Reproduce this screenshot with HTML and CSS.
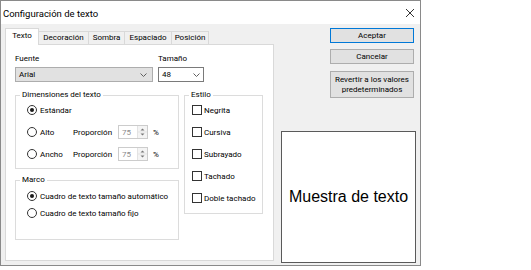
FILE: index.html
```html
<!DOCTYPE html>
<html lang="es">
<head>
<meta charset="utf-8">
<title>Configuración de texto</title>
<link rel="stylesheet" href="styles.css">
</head>
<body>
<div class="window">
  <div class="titlebar">
    <span class="title">Configuración de texto</span>
    <svg class="close" width="8" height="8" viewBox="0 0 8 8"><path d="M0 0 L8 8 M8 0 L0 8" stroke="#333" stroke-width="1" fill="none"/></svg>
  </div>
  <div class="body">
    <div class="tabs">
      <div class="tabstrip">
        <div class="tab active t-texto">Texto</div>
        <div class="tab t-deco">Decoración</div>
        <div class="tab t-sombra">Sombra</div>
        <div class="tab t-esp">Espaciado</div>
        <div class="tab t-pos">Posición</div>
      </div>
      <div class="panel">
        <div class="fields">
          <div class="field">
            <div class="label">Fuente</div>
            <div class="combo combo-font"><span>Arial</span><svg class="chev" width="7" height="4" viewBox="0 0 7 4"><path d="M0.5 0.5 L3.5 3.5 L6.5 0.5" stroke="#606060" fill="none"/></svg></div>
          </div>
          <div class="field">
            <div class="label">Tamaño</div>
            <div class="combo combo-size"><span>48</span><svg class="chev" width="7" height="4" viewBox="0 0 7 4"><path d="M0.5 0.5 L3.5 3.5 L6.5 0.5" stroke="#606060" fill="none"/></svg></div>
          </div>
        </div>
        <div class="groups">
          <div class="col-left">
            <div class="group g-dim">
              <div class="legend">Dimensiones del texto</div>
              <div class="rows">
                <div class="row"><span class="radio on"></span><span class="opt-label">Estándar</span></div>
                <div class="row">
                  <div class="opt"><span class="radio"></span><span class="opt-label">Alto</span></div>
                  <span class="prop">Proporción</span>
                  <div class="spin"><span class="spin-val">75</span><div class="spin-btns"><svg width="9" height="12" viewBox="0 0 9 12"><path d="M2.5 4.5 L4.5 2.5 L6.5 4.5 Z M2.5 7.5 L4.5 9.5 L6.5 7.5 Z" fill="#777"/><path d="M0 6 H9" stroke="#e3e3e3"/></svg></div></div>
                  <span class="pct">%</span>
                </div>
                <div class="row">
                  <div class="opt"><span class="radio"></span><span class="opt-label">Ancho</span></div>
                  <span class="prop">Proporción</span>
                  <div class="spin"><span class="spin-val">75</span><div class="spin-btns"><svg width="9" height="12" viewBox="0 0 9 12"><path d="M2.5 4.5 L4.5 2.5 L6.5 4.5 Z M2.5 7.5 L4.5 9.5 L6.5 7.5 Z" fill="#777"/><path d="M0 6 H9" stroke="#e3e3e3"/></svg></div></div>
                  <span class="pct">%</span>
                </div>
              </div>
            </div>
            <div class="group g-marco">
              <div class="legend">Marco</div>
              <div class="rows">
                <div class="row"><span class="radio on"></span><span class="opt-label">Cuadro de texto tamaño automático</span></div>
                <div class="row"><span class="radio"></span><span class="opt-label">Cuadro de texto tamaño fijo</span></div>
              </div>
            </div>
          </div>
          <div class="group g-estilo">
            <div class="legend">Estilo</div>
            <div class="rows">
              <div class="row"><span class="check"></span><span class="chk-label">Negrita</span></div>
              <div class="row"><span class="check"></span><span class="chk-label">Cursiva</span></div>
              <div class="row"><span class="check"></span><span class="chk-label">Subrayado</span></div>
              <div class="row"><span class="check"></span><span class="chk-label">Tachado</span></div>
              <div class="row"><span class="check"></span><span class="chk-label">Doble tachado</span></div>
            </div>
          </div>
        </div>
      </div>
    </div>
    <div class="side">
      <div class="btn btn-default">Aceptar</div>
      <div class="btn btn-cancel">Cancelar</div>
      <div class="btn btn-revert">Revertir a los valores<br>predeterminados</div>
      <div class="preview">Muestra de texto</div>
    </div>
  </div>
</div>
</body>
</html>
```

FILE: styles.css
```css
* { box-sizing: border-box; }
html, body { margin: 0; padding: 0; background: #ffffff; }
body {
  font-family: Roboto, "Noto Sans", sans-serif;
  font-size: 8px;
  color: #000;
}
.window {
  width: 421px;
  height: 266px;
  border: 1px solid #8a8a8a;
  background: #f0f0f0;
  display: flex;
  flex-direction: column;
}
.titlebar {
  height: 23px;
  flex: none;
  background: #fff;
  display: flex;
  align-items: center;
  justify-content: space-between;
  padding: 2px 6px 0 2px;
}
.title { font-size: 9.5px; line-height: 12px; }
.close { display: block; margin-top: -1px; }
.body {
  flex: 1;
  display: flex;
  padding: 4px 0 0 4px;
}
.tabs { width: 269px; display: flex; flex-direction: column; }
.tabstrip { height: 17px; display: flex; align-items: flex-end; }
.tab {
  height: 14px;
  border: 1px solid #d9d9d9;
  border-bottom: none;
  background: #f0f0f0;
  text-align: center;
  line-height: 12px;
  margin-left: -1px;
}
.tab.active {
  height: 17px;
  background: #fff;
  position: relative;
  z-index: 1;
  margin-left: 0;
  line-height: 13px;
}
.t-texto { width: 34px; }
.t-deco { width: 51px; }
.t-sombra { width: 37px; }
.t-esp { width: 48px; }
.t-pos { width: 38px; }
.panel {
  margin-top: -1px;
  height: 217px;
  background: #fff;
  border: 1px solid #d9d9d9;
  padding: 8px 0 0 9px;
}
.fields { display: flex; gap: 5px; }
.label { height: 11px; line-height: 11px; margin-bottom: 3px; }
.combo {
  height: 15px;
  display: flex;
  align-items: center;
  justify-content: space-between;
  padding: 0 5px 0 3px;
}
.combo-font { width: 138px; background: #e1e1e1; border: 1px solid #adadad; }
.combo-size { width: 46px; background: #fff; border: 1px solid #7a7a7a; padding-right: 3px; }
.chev { display: block; }
.groups {
  margin-top: 13px;
  display: flex;
  gap: 5px;
  align-items: flex-start;
}
.col-left { width: 164px; display: flex; flex-direction: column; gap: 11px; }
.group { border: 1px solid #dcdcdc; background: #fff; }
.legend {
  height: 10px;
  line-height: 10px;
  margin: -6px 0 0 4px;
  padding: 0 2px;
  background: #fff;
  width: fit-content;
}
.rows { display: flex; flex-direction: column; gap: 8px; padding: 3px 0 0 11px; }
.row { height: 14px; display: flex; align-items: center; }
.g-dim { padding-bottom: 7px; }
.g-marco { padding-bottom: 19px; }
.g-marco .rows { padding-top: 4px; gap: 3px; }
.g-estilo { width: 79px; padding-bottom: 8px; }
.g-estilo .rows { padding-left: 7px; }
.radio {
  width: 10px;
  height: 10px;
  border: 1px solid #333;
  border-radius: 50%;
  background: #fff;
  flex: none;
  display: flex;
  align-items: center;
  justify-content: center;
}
.radio.on::after {
  content: "";
  width: 4px;
  height: 4px;
  border-radius: 50%;
  background: #1a1a1a;
}
.opt-label { margin-left: 3px; white-space: nowrap; }
.opt { width: 46px; display: flex; align-items: center; }
.prop { width: 45px; }
.spin {
  width: 30px;
  height: 14px;
  border: 1px solid #cccccc;
  display: flex;
  justify-content: space-between;
  align-items: center;
}
.spin-val { color: #8c8c8c; padding-left: 3px; }
.spin-btns {
  width: 10px;
  height: 12px;
  border-left: 1px solid #e3e3e3;
  background: #f4f4f4;
  margin-right: 0;
}
.spin-btns svg { display: block; }
.pct { margin-left: 5px; }
.check {
  width: 10px;
  height: 10px;
  border: 1px solid #333;
  background: #fff;
  flex: none;
}
.chk-label { margin-left: 2px; }
.side {
  width: 135px;
  margin-left: 7px;
  display: flex;
  flex-direction: column;
  align-items: flex-end;
  padding-bottom: 2px;
}
.btn {
  width: 84px;
  margin-right: 2px;
  background: #e1e1e1;
  border: 1px solid #adadad;
  display: flex;
  align-items: center;
  justify-content: center;
  text-align: center;
  line-height: 10px;
}
.btn-default { height: 15px; border-color: #0078d7; }
.btn-cancel { height: 15px; margin-top: 6px; }
.btn-revert { height: 27px; margin-top: 7px; padding-top: 1px; }
.preview {
  margin-top: auto;
  width: 135px;
  height: 132px;
  background: #fff;
  border: 1px solid #5a5a5a;
  display: flex;
  align-items: center;
  justify-content: center;
  font-family: "Liberation Sans", Arial, sans-serif;
  font-size: 16px;
}
```
